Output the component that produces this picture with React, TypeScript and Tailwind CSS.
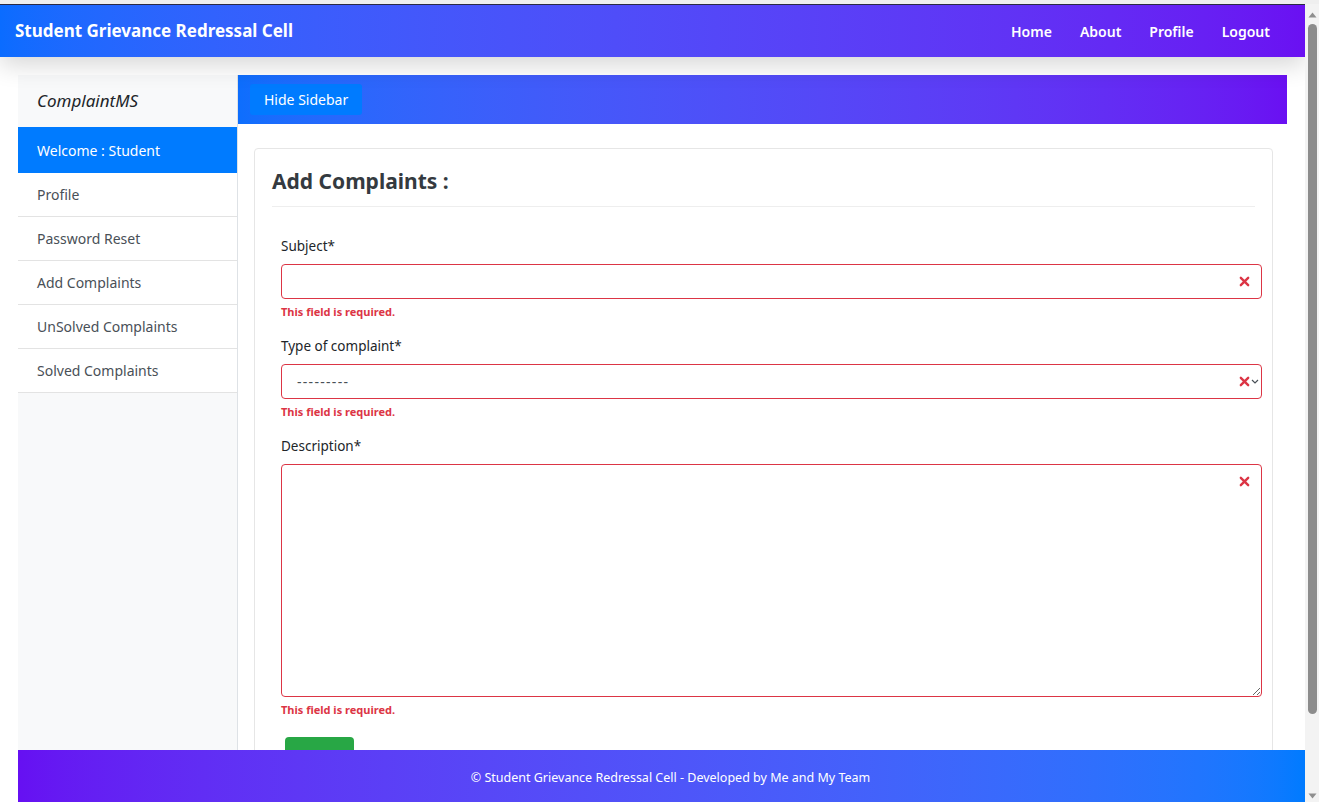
import React from "react";

const menu = ["Profile", "Password Reset", "Add Complaints", "UnSolved Complaints", "Solved Complaints"];

const XMark = () => (
  <svg width="11" height="11" viewBox="0 0 12 12" className="text-[#dc3545]">
    <path d="M2 2 L10 10 M10 2 L2 10" stroke="currentColor" strokeWidth="2.6" strokeLinecap="round" />
  </svg>
);

const Error = () => (
  <p className="mt-[5px] text-[11px] leading-[16px] font-bold text-[#dc3545]">This field is required.</p>
);

// fake browser scrollbar, the screenshot was taken with one showing
const ScrollBar = () => (
  <div className="w-[14px] shrink-0 flex flex-col items-center bg-[#f3f3f3]">
    <svg width="9" height="6" viewBox="0 0 9 6" className="mt-[8px]">
      <path d="M0.5 5.5 L4.5 0.5 L8.5 5.5 Z" fill="#8f8f8f" />
    </svg>
    <div className="mt-[6px] w-[9px] h-[690px] rounded-full bg-[#8c8c8c]" />
    <div className="flex-1" />
    <svg width="9" height="6" viewBox="0 0 9 6" className="mb-[3px]">
      <path d="M0.5 0.5 L4.5 5.5 L8.5 0.5 Z" fill="#8f8f8f" />
    </svg>
  </div>
);

export default function App() {
  return (
    <div className="h-screen flex flex-col bg-white font-['Noto_Sans',sans-serif] text-[#212529]">
      <div className="h-[4px] shrink-0 bg-[#efefef]" />
      <div className="flex-1 min-h-0 flex">
        <div className="flex-1 overflow-hidden">
          <nav className="relative z-10 h-[53px] flex items-center justify-between pl-[15px] pr-[35px] border-t border-[#2a2a44] bg-linear-to-r from-[#0a6cff] to-[#6a10f2] shadow-[0_8px_24px_rgba(0,0,0,0.16)]">
            <span className="text-white font-bold text-[17px]">Student Grievance Redressal Cell</span>
            <div className="flex gap-[28px] text-white font-semibold text-[14px]">
              <span>Home</span>
              <span>About</span>
              <span>Profile</span>
              <span>Logout</span>
            </div>
          </nav>

          <div className="mx-[18px] mt-[18px] flex">
            <aside className="w-[220px] shrink-0 min-h-screen bg-[#f8f9fa] border-r border-[#dee2e6]">
              <div className="h-[52px] flex items-center px-[19px] text-[17px] italic text-[#212529]">ComplaintMS</div>
              <div className="h-[46px] flex items-center px-[19px] bg-[#007bff] text-white text-[14px]">Welcome : Student</div>
              {menu.map((m) => (
                <div key={m} className="h-[44px] flex items-center px-[19px] bg-white border-b border-[#e3e3e3] text-[14px] text-[#495057]">
                  {m}
                </div>
              ))}
            </aside>

            <main className="flex-1">
              <div className="h-[49px] flex items-center px-[12px] bg-linear-to-r from-[#0d6efd] to-[#6a10f2]">
                <button className="h-[31px] px-[14px] rounded-[3px] bg-[#007bff] text-white text-[14px]">Hide Sidebar</button>
              </div>

              <div className="ml-[16px] mr-[14px] mt-[24px] border border-[#e6e6e6] rounded-[4px] px-[17px] pt-[17px] pb-[30px]">
                <h2 className="text-[21px] leading-[30px] font-bold text-[#343a40] pb-[10px] border-b border-[#eeeeee]">Add Complaints :</h2>

                <form className="ml-[9px] mr-[-7px] pt-[29px]">
                  <label className="block text-[13.5px] leading-[21px] text-[#212529]">Subject*</label>
                  <div className="relative mt-[7px]">
                    <input className="block w-full h-[35px] rounded-[4px] border border-[#dc3545] px-[12px] outline-none" />
                    <span className="absolute right-[12px] top-[12px]"><XMark /></span>
                  </div>
                  <Error />

                  <label className="block mt-[16px] text-[13.5px] leading-[21px] text-[#212529]">Type of complaint*</label>
                  <div className="relative mt-[7px]">
                    <div className="w-full h-[35px] rounded-[4px] border border-[#dc3545] px-[15px] flex items-center text-[14px] tracking-[1.3px] text-[#495057]">---------</div>
                    <span className="absolute right-[12px] top-[12px]"><XMark /></span>
                    <svg width="8" height="6" viewBox="0 0 8 6" className="absolute right-[3px] top-[15px]">
                      <path d="M1 1 L4 4 L7 1" fill="none" stroke="#495057" strokeWidth="1.2" />
                    </svg>
                  </div>
                  <Error />

                  <label className="block mt-[16px] text-[13.5px] leading-[21px] text-[#212529]">Description*</label>
                  <div className="relative mt-[7px]">
                    <textarea className="block w-full h-[233px] rounded-[4px] border border-[#dc3545] px-[12px] outline-none" />
                    <span className="absolute right-[12px] top-[12px]"><XMark /></span>
                  </div>
                  <Error />

                  <button type="button" className="mt-[19px] ml-[4px] h-[36px] px-[11px] rounded-[4px] bg-[#28a745] text-white text-[14px]">Submit</button>
                </form>
              </div>
            </main>
          </div>
        </div>
        <ScrollBar />
      </div>

      <footer className="fixed bottom-0 left-[18px] right-[14px] h-[52px] flex items-center justify-center pl-[18px] pt-[4px] bg-linear-to-r from-[#6610f2] to-[#007bff] text-white text-[12.5px]">
        © Student Grievance Redressal Cell - Developed by Me and My Team
      </footer>
    </div>
  );
}
